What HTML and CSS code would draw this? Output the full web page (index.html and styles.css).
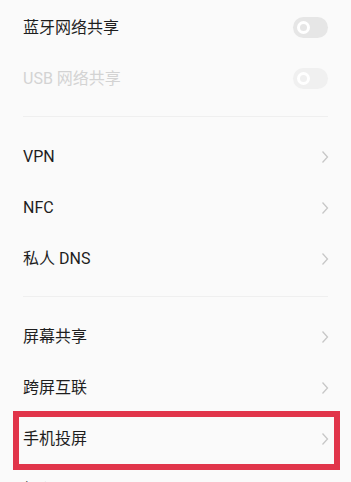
FILE: index.html
```html
<!DOCTYPE html>
<html lang="zh-CN">
<head>
<meta charset="UTF-8">
<meta name="viewport" content="width=device-width, initial-scale=1.0">
<title>连接与共享</title>
<link rel="stylesheet" href="styles.css">
</head>
<body>

<div class="group group-first">
  <div class="row">
    <span class="label">蓝牙网络共享</span>
    <span class="toggle"><span class="knob"></span></span>
  </div>
  <div class="row disabled">
    <span class="label">USB 网络共享</span>
    <span class="toggle"><span class="knob"></span></span>
  </div>
</div>

<div class="divider"></div>

<div class="group">
  <div class="row">
    <span class="label">VPN</span>
    <svg class="chevron" width="8" height="14" viewBox="0 0 8 14"><path d="M1.5 1.5 L6.5 7 L1.5 12.5"/></svg>
  </div>
  <div class="row">
    <span class="label">NFC</span>
    <svg class="chevron" width="8" height="14" viewBox="0 0 8 14"><path d="M1.5 1.5 L6.5 7 L1.5 12.5"/></svg>
  </div>
  <div class="row">
    <span class="label">私人 DNS</span>
    <svg class="chevron" width="8" height="14" viewBox="0 0 8 14"><path d="M1.5 1.5 L6.5 7 L1.5 12.5"/></svg>
  </div>
</div>

<div class="divider"></div>

<div class="group">
  <div class="row">
    <span class="label">屏幕共享</span>
    <svg class="chevron" width="8" height="14" viewBox="0 0 8 14"><path d="M1.5 1.5 L6.5 7 L1.5 12.5"/></svg>
  </div>
  <div class="row">
    <span class="label">跨屏互联</span>
    <svg class="chevron" width="8" height="14" viewBox="0 0 8 14"><path d="M1.5 1.5 L6.5 7 L1.5 12.5"/></svg>
  </div>
  <div class="row highlight">
    <span class="label">手机投屏</span>
    <svg class="chevron" width="8" height="14" viewBox="0 0 8 14"><path d="M1.5 1.5 L6.5 7 L1.5 12.5"/></svg>
  </div>
  <div class="row">
    <span class="label">打印</span>
    <svg class="chevron" width="8" height="14" viewBox="0 0 8 14"><path d="M1.5 1.5 L6.5 7 L1.5 12.5"/></svg>
  </div>
</div>

</body>
</html>
```

FILE: styles.css
```css
body, html {
  margin: 0;
  padding: 0;
  background-color: #fafafa;
  font-family: Roboto, "Noto Sans CJK SC", sans-serif;
  color: #1e1e1e;
  overflow: hidden;
}
.group {
  padding: 14px 0 12px 0;
}
.group-first {
  padding-top: 2px;
}
.row {
  height: 51px;
  padding: 0 23px;
  display: flex;
  align-items: center;
  justify-content: space-between;
  position: relative;
}
.label {
  font-size: 16px;
  line-height: 20px;
}
.row.disabled .label {
  color: #d3d3d3;
}
.toggle {
  width: 35px;
  height: 21px;
  border-radius: 11px;
  background-color: #e6e6e6;
  display: flex;
  align-items: center;
  padding-left: 4px;
  box-sizing: border-box;
}
.knob {
  width: 13px;
  height: 13px;
  border-radius: 50%;
  border: 3.5px solid #fff;
  box-sizing: border-box;
  background-color: #e6e6e6;
}
.row.disabled .toggle,
.row.disabled .knob {
  background-color: #f0f0f0;
}
.chevron {
  margin-right: -1px;
}
.chevron path {
  fill: none;
  stroke: #c7c7c7;
  stroke-width: 1.3;
}
.divider {
  height: 1px;
  margin: 0 23px;
  background-color: #efefef;
}
/* 红色标注框 */
.row.highlight::after {
  content: "";
  position: absolute;
  top: -2px;
  bottom: -6px;
  left: 13px;
  right: 11px;
  border: 6px solid #e1354a;
}
```
